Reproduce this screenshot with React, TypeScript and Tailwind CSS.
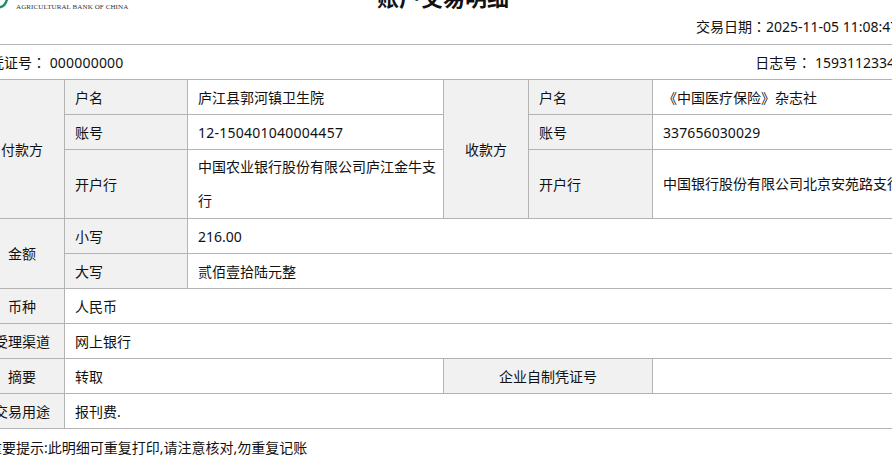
import React from 'react';

const label = 'border border-[#b3b3b3] bg-[#f1f1f1] text-center font-normal';
const sub = 'border border-[#b3b3b3] bg-[#f1f1f1] px-[10px] text-left font-normal';
const cell = 'border border-[#b3b3b3] pl-[10px] pr-[5px] text-left font-normal';
const colon = "font-['Noto_Sans_CJK_TC',sans-serif]";

export default function App() {
    return (
        <div className="h-[472px] w-[892px] overflow-hidden bg-white font-['Noto_Sans','Noto_Sans_CJK_SC',sans-serif] text-[14px] text-[#111]">
            <div className="ml-[-21px] mt-[-16px] w-[928px]">
                <div className="relative h-[61px] border-b border-[#b3b3b3]">
                    <svg className="absolute left-[21px] top-[16px]" width="10" height="10" viewBox="0 0 10 10">
                        <path d="M-1 7.500 C3 7 6 4 7 -1" fill="none" stroke="#1c8f6b" strokeWidth="2.500" />
                    </svg>
                    <div className="absolute left-[37px] top-[18px] font-['Liberation_Serif',serif] text-[7px] leading-[10px] tracking-[0.1px] text-[#333]">
                        AGRICULTURAL BANK OF CHINA
                    </div>
                    <h1 className="text-center text-[22px] font-bold leading-[26px]">账户交易明细</h1>
                    <div className="absolute left-[717px] top-[32px] whitespace-nowrap leading-[20px]">
                        交易日期<span className={colon}>：</span>2025-11-05 11:08:47
                    </div>
                </div>
                <div className="flex h-[34px] items-center justify-between whitespace-nowrap pl-[11px]">
                    <span>凭证号<span className={colon}>：</span> <span className="tracking-[0.2px]">000000000</span></span>
                    <span className="mr-[4px]">日志号<span className={colon}>：</span> 15931123345</span>
                </div>
                <table className="w-[928px] table-fixed border-collapse">
                    <colgroup>
                        <col className="w-[85px]" />
                        <col className="w-[123px]" />
                        <col className="w-[256px]" />
                        <col className="w-[85px]" />
                        <col className="w-[124px]" />
                        <col />
                    </colgroup>
                    <tbody>
                        <tr className="h-[35px]">
                            <th rowSpan={3} className={label}>付款方</th>
                            <th className={sub}>户名</th>
                            <td className={cell}>庐江县郭河镇卫生院</td>
                            <th rowSpan={3} className={label}>收款方</th>
                            <th className={sub}>户名</th>
                            <td className={cell}>《中国医疗保险》杂志社</td>
                        </tr>
                        <tr className="h-[35px]">
                            <th className={sub}>账号</th>
                            <td className={`${cell} tracking-[0.25px]`}>12-150401040004457</td>
                            <th className={sub}>账号</th>
                            <td className={`${cell} tracking-[0.1px]`}>337656030029</td>
                        </tr>
                        <tr className="h-[69px]">
                            <th className={sub}>开户行</th>
                            <td className={`${cell} leading-[34px]`}>中国农业银行股份有限公司庐江金牛支行</td>
                            <th className={sub}>开户行</th>
                            <td className={`${cell} leading-[34px]`}>中国银行股份有限公司北京安苑路支行</td>
                        </tr>
                        <tr className="h-[35px]">
                            <th rowSpan={2} className={label}>金额</th>
                            <th className={sub}>小写</th>
                            <td colSpan={4} className={cell}>216.00</td>
                        </tr>
                        <tr className="h-[35px]">
                            <th className={sub}>大写</th>
                            <td colSpan={4} className={cell}>贰佰壹拾陆元整</td>
                        </tr>
                        <tr className="h-[35px]">
                            <th className={label}>币种</th>
                            <td colSpan={5} className={cell}>人民币</td>
                        </tr>
                        <tr className="h-[35px]">
                            <th className={label}>受理渠道</th>
                            <td colSpan={5} className={cell}>网上银行</td>
                        </tr>
                        <tr className="h-[35px]">
                            <th className={label}>摘要</th>
                            <td colSpan={2} className={cell}>转取</td>
                            <th colSpan={2} className={label}>企业自制凭证号</th>
                            <td className={cell}></td>
                        </tr>
                        <tr className="h-[35px]">
                            <th className={label}>交易用途</th>
                            <td colSpan={5} className={cell}>报刊费.</td>
                        </tr>
                    </tbody>
                </table>
                <p className="ml-[9px] mt-[9px] leading-[20px]">重要提示:此明细可重复打印,请注意核对,勿重复记账</p>
            </div>
        </div>
    );
}
